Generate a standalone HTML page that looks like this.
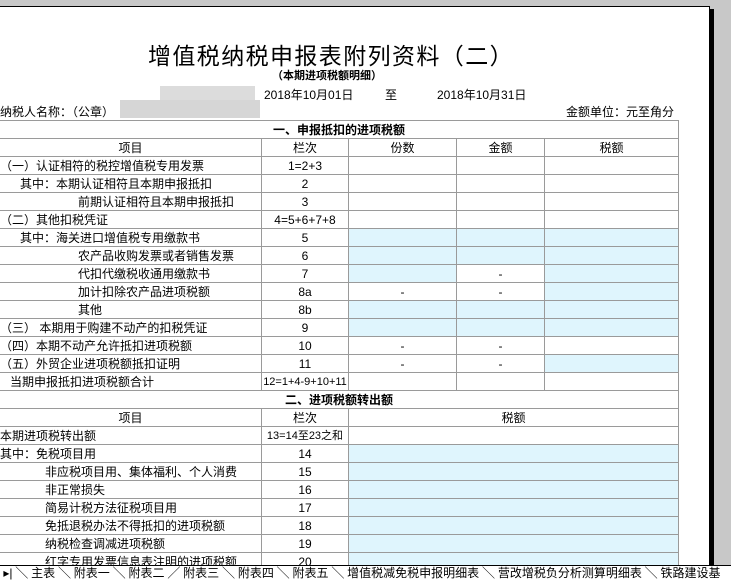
<!DOCTYPE html>
<html><head><meta charset="utf-8"><style>
*{margin:0;padding:0;box-sizing:border-box}
body{width:731px;height:581px;overflow:hidden;background:#c8c8c8;position:relative;font-family:"Liberation Sans","Noto Sans CJK SC","WenQuanYi Zen Hei",sans-serif;font-size:12px;color:#000}
.page{position:absolute;left:0;top:6px;width:710px;height:575px;background:#fff;border-top:1px solid #000;border-right:1px solid #000}
.sh{position:absolute;left:710px;top:9px;width:4px;height:572px;background:#000}
.t{position:absolute;white-space:nowrap}
table{position:absolute;left:-1px;top:120px;width:679px;border-collapse:collapse;table-layout:fixed}
td{border:1px solid #9a9a9a;height:18px;padding:0;line-height:16px;white-space:nowrap;overflow:hidden;font-size:12px}
.c{text-align:center}.b{background:#dff5fd}.h{font-weight:bold;text-align:center}
.tabs{position:absolute;left:0;top:565px;width:731px;height:16px;background:#fff;border-top:1px solid #000;font-size:12px;line-height:15px;white-space:nowrap}
.blur{position:absolute;background:#d6d6d6}
</style></head><body>
<div class="page"></div><div class="sh"></div>
<div class="t" style="left:148px;top:37px;font-size:23px;letter-spacing:1.4px">增值税纳税申报表附列资料（二）</div>
<div class="t" style="left:272px;top:67px;font-weight:bold;font-size:11px">（本期进项税额明细）</div>
<div class="t" style="left:170px;top:86px;color:#888">税款所属时间</div>
<div class="t" style="left:264px;top:86px">2018年10月01日</div>
<div class="t" style="left:385px;top:86px">至</div>
<div class="t" style="left:437px;top:86px">2018年10月31日</div>
<div class="t" style="left:0;top:103px">纳税人名称：（公章）</div>
<div class="t" style="left:566px;top:103px">金额单位：元至角分</div>
<div class="blur" style="left:160px;top:86px;width:95px;height:14px;background:#dcdcdc"></div>
<div class="blur" style="left:120px;top:100px;width:140px;height:18px"></div>
<table>
<colgroup><col style="width:262px"><col style="width:87px"><col style="width:108px"><col style="width:88px"><col style="width:134px"></colgroup>
<tr><td colspan="5" class="h">一、申报抵扣的进项税额</td></tr>
<tr><td class="c">项目</td><td class="c">栏次</td><td class="c">份数</td><td class="c">金额</td><td class="c">税额</td></tr>
<tr><td>（一）认证相符的税控增值税专用发票</td><td class="c">1=2+3</td><td></td><td></td><td></td></tr>
<tr><td>&nbsp;&nbsp;&nbsp;&nbsp;&nbsp;&nbsp;其中：本期认证相符且本期申报抵扣</td><td class="c">2</td><td></td><td></td><td></td></tr>
<tr><td style="padding-left:78px">前期认证相符且本期申报抵扣</td><td class="c">3</td><td></td><td></td><td></td></tr>
<tr><td>（二）其他扣税凭证</td><td class="c">4=5+6+7+8</td><td></td><td></td><td></td></tr>
<tr><td>&nbsp;&nbsp;&nbsp;&nbsp;&nbsp;&nbsp;其中：海关进口增值税专用缴款书</td><td class="c">5</td><td class="b"></td><td class="b"></td><td class="b"></td></tr>
<tr><td style="padding-left:78px">农产品收购发票或者销售发票</td><td class="c">6</td><td class="b"></td><td class="b"></td><td class="b"></td></tr>
<tr><td style="padding-left:78px">代扣代缴税收通用缴款书</td><td class="c">7</td><td class="b"></td><td class="c">-</td><td class="b"></td></tr>
<tr><td style="padding-left:78px">加计扣除农产品进项税额</td><td class="c">8a</td><td class="c">-</td><td class="c">-</td><td class="b"></td></tr>
<tr><td style="padding-left:78px">其他</td><td class="c">8b</td><td class="b"></td><td class="b"></td><td class="b"></td></tr>
<tr><td>（三）&nbsp;本期用于购建不动产的扣税凭证</td><td class="c">9</td><td class="b"></td><td class="b"></td><td class="b"></td></tr>
<tr><td>（四）本期不动产允许抵扣进项税额</td><td class="c">10</td><td class="c">-</td><td class="c">-</td><td></td></tr>
<tr><td>（五）外贸企业进项税额抵扣证明</td><td class="c">11</td><td class="c">-</td><td class="c">-</td><td class="b"></td></tr>
<tr><td style="padding-left:10px">当期申报抵扣进项税额合计</td><td class="c" style="font-size:11px">12=1+4-9+10+11</td><td></td><td></td><td></td></tr>
<tr><td colspan="5" class="h">二、进项税额转出额</td></tr>
<tr><td class="c">项目</td><td class="c">栏次</td><td colspan="3" class="c">税额</td></tr>
<tr><td>本期进项税转出额</td><td class="c" style="font-size:11px">13=14至23之和</td><td colspan="3"></td></tr>
<tr><td>其中：免税项目用</td><td class="c">14</td><td colspan="3" class="b"></td></tr>
<tr><td style="padding-left:45px">非应税项目用、集体福利、个人消费</td><td class="c">15</td><td colspan="3" class="b"></td></tr>
<tr><td style="padding-left:45px">非正常损失</td><td class="c">16</td><td colspan="3" class="b"></td></tr>
<tr><td style="padding-left:45px">简易计税方法征税项目用</td><td class="c">17</td><td colspan="3" class="b"></td></tr>
<tr><td style="padding-left:45px">免抵退税办法不得抵扣的进项税额</td><td class="c">18</td><td colspan="3" class="b"></td></tr>
<tr><td style="padding-left:45px">纳税检查调减进项税额</td><td class="c">19</td><td colspan="3" class="b"></td></tr>
<tr><td style="padding-left:45px">红字专用发票信息表注明的进项税额</td><td class="c">20</td><td colspan="3" class="b"></td></tr>
</table>
<div class="tabs">&nbsp;▸|&nbsp;╲&nbsp;主表&nbsp;╲&nbsp;附表一&nbsp;╲&nbsp;附表二&nbsp;╱&nbsp;附表三&nbsp;╲&nbsp;附表四&nbsp;╲&nbsp;附表五&nbsp;╲&nbsp;增值税减免税申报明细表&nbsp;╲&nbsp;营改增税负分析测算明细表&nbsp;╲&nbsp;铁路建设基</div>
</body></html>
